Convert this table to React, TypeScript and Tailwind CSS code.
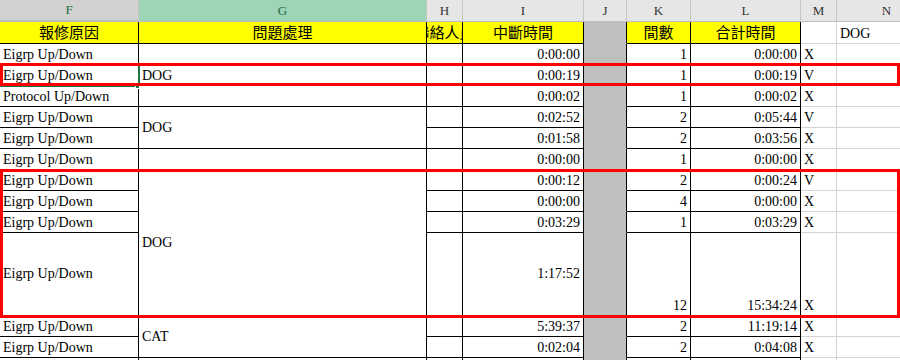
import type { ReactNode } from 'react';

type Row = {
  f: string;
  g?: { text: string; span: string };
  i: string;
  k: string;
  l: string;
  m: string;
  tall?: boolean;
};

const rows: Row[] = [
  { f: 'Eigrp Up/Down', g: { text: '', span: '' }, i: '0:00:00', k: '1', l: '0:00:00', m: 'X' },
  { f: 'Eigrp Up/Down', g: { text: 'DOG', span: '' }, i: '0:00:19', k: '1', l: '0:00:19', m: 'V' },
  { f: 'Protocol Up/Down', g: { text: '', span: '' }, i: '0:00:02', k: '1', l: '0:00:02', m: 'X' },
  { f: 'Eigrp Up/Down', g: { text: 'DOG', span: 'row-span-2' }, i: '0:02:52', k: '2', l: '0:05:44', m: 'V' },
  { f: 'Eigrp Up/Down', i: '0:01:58', k: '2', l: '0:03:56', m: 'X' },
  { f: 'Eigrp Up/Down', g: { text: '', span: '' }, i: '0:00:00', k: '1', l: '0:00:00', m: 'X' },
  { f: 'Eigrp Up/Down', g: { text: 'DOG', span: 'row-span-4' }, i: '0:00:12', k: '2', l: '0:00:24', m: 'V' },
  { f: 'Eigrp Up/Down', i: '0:00:00', k: '4', l: '0:00:00', m: 'X' },
  { f: 'Eigrp Up/Down', i: '0:03:29', k: '1', l: '0:03:29', m: 'X' },
  { f: 'Eigrp Up/Down', i: '1:17:52', k: '12', l: '15:34:24', m: 'X', tall: true },
  { f: 'Eigrp Up/Down', g: { text: 'CAT', span: 'row-span-2' }, i: '5:39:37', k: '2', l: '11:19:14', m: 'X' },
  { f: 'Eigrp Up/Down', i: '0:02:04', k: '2', l: '0:04:08', m: 'X' },
  { f: '', g: { text: '', span: '' }, i: '', k: '', l: '', m: '' },
];

function Cell({ children, className = '' }: { children?: ReactNode; className?: string }) {
  return (
    <div className={`flex overflow-hidden whitespace-nowrap border-r border-b leading-4 ${className}`}>
      {children}
    </div>
  );
}

const colHeads = [
  { l: 'F', cls: 'bg-[#d2d2d2] text-[#1e6b41] border-b-2 border-b-[#217346]' },
  { l: 'G', cls: 'bg-[#9fd5b7] text-[#1e6b41] border-b-[#9fd5b7]' },
  { l: 'H', cls: 'bg-[#e6e6e6] text-[#333]' },
  { l: 'I', cls: 'bg-[#e6e6e6] text-[#333]' },
  { l: 'J', cls: 'bg-[#e6e6e6] text-[#333]' },
  { l: 'K', cls: 'bg-[#e6e6e6] text-[#333]' },
  { l: 'L', cls: 'bg-[#e6e6e6] text-[#333]' },
  { l: 'M', cls: 'bg-[#e6e6e6] text-[#333]' },
  { l: 'N', cls: 'bg-[#e6e6e6] text-[#333]' },
];

export default function App() {
  return (
    <div
      className="relative h-[360px] w-[900px] overflow-hidden bg-white text-[14px] text-black"
      style={{ fontFamily: '"Liberation Serif", "Noto Sans CJK TC", serif' }}
    >
      <div className="grid w-[937px] grid-cols-[139px_288px_36px_121px_43px_64px_110px_36px_100px] grid-rows-[22px_22px_repeat(9,21px)_83px_21px_21px_21px]">
        {/* column letters */}
        {colHeads.map((h) => (
          <div
            key={h.l}
            className={`flex items-center justify-center border-r border-b border-r-[#c6c6c6] border-b-[#bdbdbd] text-[13px] ${h.cls}`}
          >
            {h.l}
          </div>
        ))}

        {/* yellow title row */}
        <Cell className="items-center justify-center border-black bg-[#ffff00] text-[15px]">報修原因</Cell>
        <Cell className="items-center justify-center border-black bg-[#ffff00] text-[15px]">問題處理</Cell>
        <Cell className="items-center justify-center border-black bg-[#ffff00] text-[15px]">聯絡人員</Cell>
        <Cell className="items-center justify-center border-black bg-[#ffff00] text-[15px]">中斷時間</Cell>
        <Cell className="border-r-black border-b-[#bfbfbf] bg-[#bfbfbf]" />
        <Cell className="items-center justify-center border-black bg-[#ffff00] text-[15px]">間數</Cell>
        <Cell className="items-center justify-center border-black bg-[#ffff00] text-[15px]">合計時間</Cell>
        <Cell className="border-[#d4d4d4]" />
        <Cell className="items-end border-[#d4d4d4] pb-[1px] pl-[3px]">DOG</Cell>

        {/* data rows */}
        {rows.map((r, idx) => (
          <div key={idx} className="contents">
            <Cell className={`border-black pl-[3px] ${r.tall ? 'items-center' : 'items-end pb-[1px]'}`}>{r.f}</Cell>
            {r.g && (
              <Cell className={`border-black pl-[3px] ${r.g.span} ${r.g.span ? 'items-center' : 'items-end pb-[1px]'}`}>
                {r.g.text}
              </Cell>
            )}
            <Cell className="border-black" />
            <Cell className={`justify-end border-black pr-[3px] ${r.tall ? 'items-center' : 'items-end pb-[1px]'}`}>{r.i}</Cell>
            <Cell className="border-r-black border-b-[#bfbfbf] bg-[#bfbfbf]" />
            <Cell className="items-end justify-end border-black pb-[1px] pr-[3px]">{r.k}</Cell>
            <Cell className="items-end justify-end border-black pb-[1px] pr-[3px]">{r.l}</Cell>
            <Cell className="items-end border-[#d4d4d4] pb-[1px] pl-[3px]">{r.m}</Cell>
            <Cell className="border-[#d4d4d4]" />
          </div>
        ))}
      </div>

      {/* active cell */}
      <div className="absolute left-0 top-[63px] h-[24px] w-[140px] border-2 border-[#217346]" />
      <div className="absolute left-[135px] top-[84px] h-[5px] w-[5px] border border-white bg-[#217346]" />

      {/* red highlight boxes */}
      <div className="absolute left-0 top-[63px] h-[23px] w-[900px] border-[3px] border-[#ff0000]" />
      <div className="absolute left-0 top-[169px] h-[149px] w-[900px] border-[3px] border-[#ff0000]" />
    </div>
  );
}
